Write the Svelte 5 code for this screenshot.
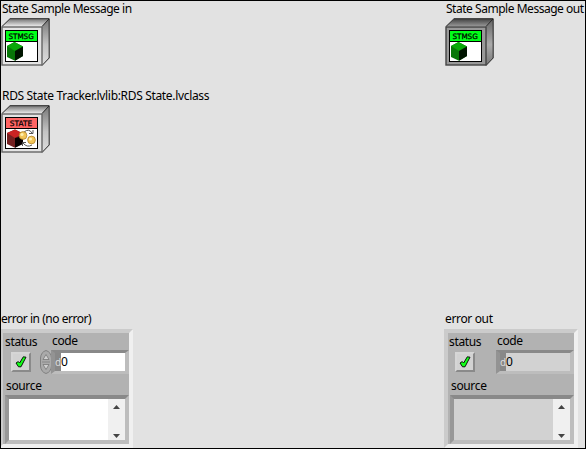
<script>
  const messages = [
    { label: 'State Sample Message in', title: 'STMSG', spacing: -0.47, kind: 'msg' },
    { label: 'RDS State Tracker.lvlib:RDS State.lvclass', title: 'STATE', spacing: -0.33, kind: 'state' }
  ];
</script>

{#snippet cube(title, kind, dark)}
  <svg class="object" width="49" height="49" viewBox="0 0 49 49">
    <defs>
      <linearGradient id="top{kind}{dark}" x1="0" y1="1" x2="0" y2="0">
        <stop offset="0" stop-color={dark ? '#9a9a9a' : '#eeeeee'} />
        <stop offset="1" stop-color={dark ? '#444' : '#777'} />
      </linearGradient>
      <linearGradient id="side{kind}{dark}" x1="0" y1="0" x2="0" y2="1">
        <stop offset="0" stop-color={dark ? '#666' : '#777'} />
        <stop offset=".55" stop-color={dark ? '#aaa' : '#c4c4c4'} />
        <stop offset="1" stop-color={dark ? '#777' : '#ddd'} />
      </linearGradient>
    </defs>
    <path d="M1 8.5L9 1H48L41 8.5Z" fill="url(#top{kind}{dark})" />
    <path d="M41 8.5L48 1V40L41 47.5Z" fill="url(#side{kind}{dark})" />
    <path d="M1 8.5L9 .7H48.2V40L41 47.5M41 8.5L48 1" fill="none" stroke="#222" />
    <rect x="1" y="9" width="40" height="38" fill={dark ? '#999' : '#e4e4e4'} stroke={dark ? '#444' : '#666'} stroke-width="1.4" />
    <rect x="4.5" y="12.5" width="32" height="31" fill="#fff" stroke="#000" />
    <rect x="5" y="13" width="31" height="10" fill={kind === 'msg' ? '#00ff18' : '#ff6464'} />
    <path d="M4 23.5H37" stroke="#000" />
    <text x={kind === 'msg' ? 7.4 : 8.8} y="20.9" textLength={kind === 'msg' ? 25.4 : 22.4} lengthAdjust="spacingAndGlyphs">{title}</text>
    {#if kind === 'msg'}
      <path d="M6 28L13.5 24L22 28.5V38L14 42.8L6 39Z" fill="#087708" />
      <path d="M6 28L13.5 24L22 28.5L14 33Z" fill="#08a808" />
      <path d="M14 33L22 28.5V38L14 42.8Z" fill="#001500" />
    {:else}
      <path d="M6 28L14 24.5L22 28.5V38L14 42.8L6 39Z" fill="#742020" />
      <path d="M6 28L14 24.5L22 28.5L14 33Z" fill="#ca2424" />
      <path d="M14 33L22 31V39L14 42.8Z" fill="#080000" />
      <path d="M23 27Q28 23 31 28M28 28.5H32V25M31 40Q26 43 22 38M21.5 41V37.5H25" fill="none" stroke="#555" />
      <circle cx="22" cy="30.5" r="3.9" fill="#f3c557" stroke="#a87922" stroke-width=".7" />
      <circle cx="30.5" cy="35" r="3.9" fill="#f3c557" stroke="#a87922" stroke-width=".7" />
      <circle cx="21" cy="29.5" r="1.6" fill="#fff0b0" /><circle cx="29.5" cy="34" r="1.6" fill="#fff0b0" />
    {/if}
  </svg>
{/snippet}

{#snippet cluster(input)}
  <div class="cluster">
    <div class="top">
      <div class="status">
        <span class="status-label">status</span>
        <div class="led">
          <svg width="14" height="14" viewBox="0 0 14 14"><path d="M2 8L4.3 6.6L5.6 8L9.3 1.8L12 2.2L7 11.8H4.5Z" fill="#12ff18" stroke="#000" stroke-width=".9" /></svg>
        </div>
      </div>
      <div class="code">
        <span class="code-label">code</span>
        <div class="numeric">
          <div class="spin">
            {#if input}
              <svg width="12" height="24" viewBox="0 0 12 24">
                <path d="M6 .5Q11 2 11.5 8V16Q11 22 6 23.5Q1 22 .5 16V8Q1 2 6 .5Z" fill="#aaa" stroke="#808080" />
                <path d="M2 12H10" stroke="#888" /><path d="M3 9.5L6 4.5L9 9.5ZM3 14.5H9L6 19.5Z" fill="#d0d0d0" stroke="#777" stroke-width=".8" />
              </svg>
            {/if}
          </div>
          <div class="field" class:readonly={!input}><span class="radix">d</span><span>0</span></div>
        </div>
      </div>
    </div>
    <span class="source-label">source</span>
    <div class="source" class:readonly={!input}>
      <div class="scroll">
        <svg width="7" height="4"><path d="M3.5 0L7 4H0Z" fill="#444" /></svg>
        <svg width="7" height="4"><path d="M0 0H7L3.5 4Z" fill="#444" /></svg>
      </div>
    </div>
  </div>
{/snippet}

<main>
  <section class="left">
    <div class="objects">
      {#each messages as item}
        <div class="item">
          <span class="label" style:letter-spacing="{item.spacing}px">{item.label}</span>
          {@render cube(item.title, item.kind, false)}
        </div>
      {/each}
    </div>
    <span class="error-label in">error in (no error)</span>
    {@render cluster(true)}
  </section>
  <section class="right">
    <div class="objects">
      <div class="item">
        <span class="label out">State Sample Message out</span>
        {@render cube('STMSG', 'msg', true)}
      </div>
    </div>
    <span class="error-label">error out</span>
    {@render cluster(false)}
  </section>
</main>

<style>
  main { box-sizing: border-box; width: 586px; height: 449px; border: 1px solid #000; background: #e2e2e2; display: flex; justify-content: space-between; overflow: hidden; font: 12px/16px "Noto Sans", "Open Sans", sans-serif; color: #000; }
  section { display: flex; flex-direction: column; white-space: nowrap; }
  span { display: block; letter-spacing: -.35px; }
  svg { display: block; flex: none; }
  .left { width: 260px; }
  .right { width: 140px; }
  .objects { height: 310px; flex: none; }
  .item { height: 87px; }
  .label { height: 17px; padding-left: 1px; }
  .out { letter-spacing: -.47px; }
  .in { letter-spacing: -.47px; }
  text { font: 400 7.4px "DejaVu Sans", sans-serif; fill: #000; stroke: #000; stroke-width: .25px; }
  .error-label { height: 18px; flex: none; }
  .cluster { box-sizing: border-box; width: 134px; height: 119px; flex: none; margin-left: -1px; border: 4px solid; border-color: #cbcbcb #f0f0f0 #f0f0f0 #cbcbcb; background: #b2b2b2; }
  .left .cluster { margin-left: -2px; }
  .right .status { width: 36px; }
  .right .status-label { padding-left: 1px; }
  .right .led { margin-left: 7px; }
  .right .spin { width: 12px; }
  .right .code-label { padding-left: 13px; }
  .top { display: flex; height: 45px; }
  .status { width: 37px; }
  .status-label { padding: 1px 0 0 2px; height: 18px; }
  .led { box-sizing: border-box; width: 20px; height: 20px; margin-left: 8px; border: 2px solid; border-color: #d6d6d6 #8a8a8a #8a8a8a #d6d6d6; background: #d2d2d2; padding: 1px; }
  .code-label { padding: 0 0 0 12px; height: 17px; }
  .numeric { display: flex; }
  .spin { width: 11px; }
  .field { box-sizing: border-box; width: 78px; height: 24px; border: 3px solid; border-width: 3px 4px 3px 4px; border-color: #898989 #bdbdbd #bdbdbd #939393; background: #fff; display: flex; line-height: 18px; }
  .field.readonly, .source.readonly { background: #d2d2d2; }
  .radix { width: 6px; background: #888; color: #ddd; font-size: 10px; letter-spacing: 0; }
  .source-label { padding-left: 3px; height: 17px; }
  .source { box-sizing: border-box; height: 49px; margin-left: 2px; border: 4px solid; border-color: #898989 #bdbdbd #bdbdbd #989898; background: #fff; display: flex; justify-content: flex-end; }
  .scroll { box-sizing: border-box; width: 17px; background: #f0f0f0; padding: 6px 5px 2px; display: flex; flex-direction: column; justify-content: space-between; }
</style>
